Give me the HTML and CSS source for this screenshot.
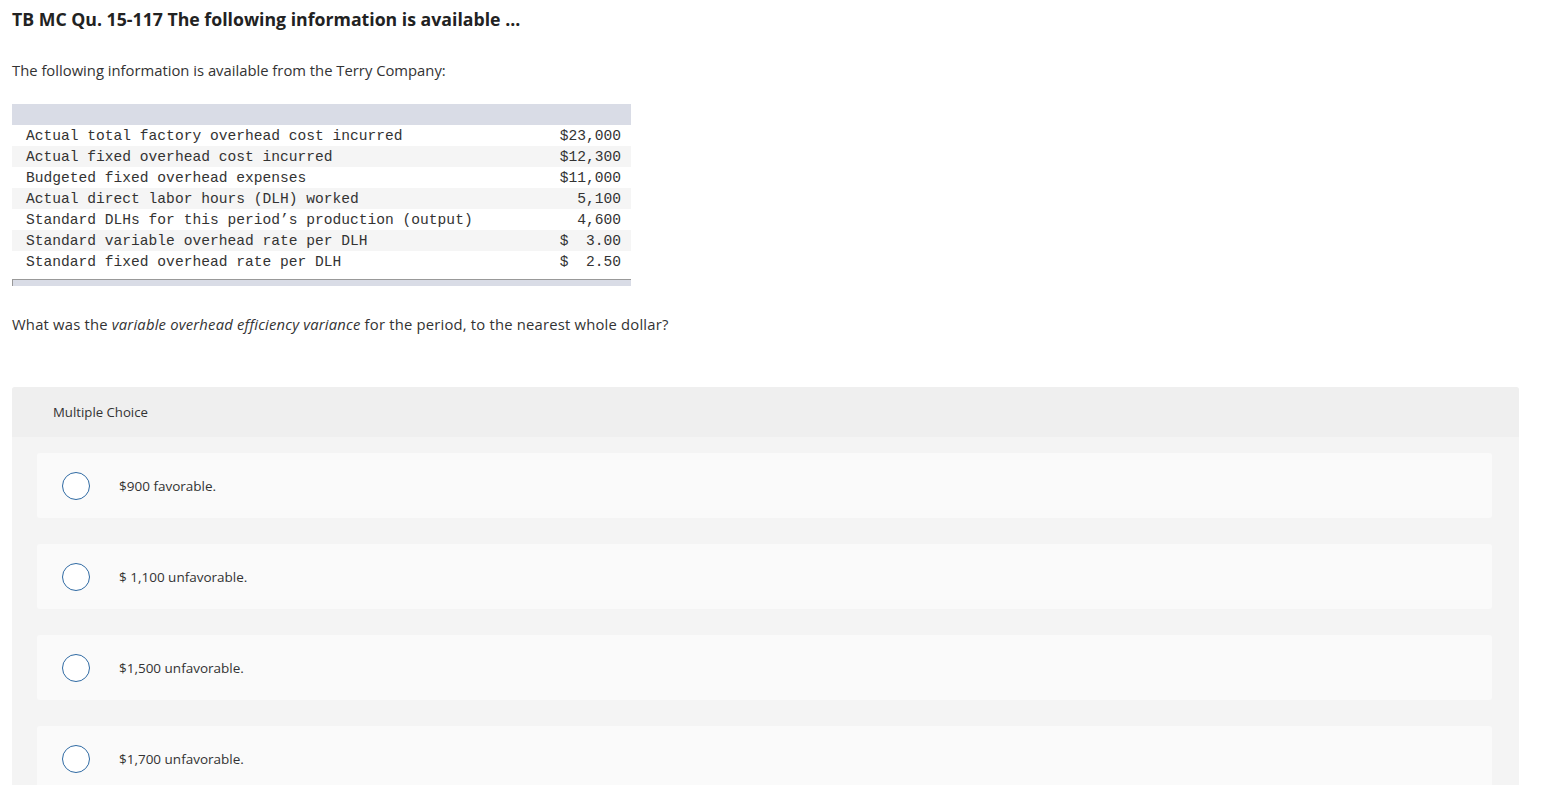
FILE: index.html
```html
<!DOCTYPE html>
<html>
<head>
<meta charset="utf-8">
<link rel="stylesheet" href="styles.css">
</head>
<body>
<div class="page">
  <h1 class="title">TB MC Qu. 15-117 The following information is available ...</h1>
  <p class="intro">The following information is available from the Terry Company:</p>
  <div class="table-wrap">
    <div class="thead"></div>
    <div class="row"><span>Actual total factory overhead cost incurred</span><span>$23,000</span></div>
    <div class="row alt"><span>Actual fixed overhead cost incurred</span><span>$12,300</span></div>
    <div class="row"><span>Budgeted fixed overhead expenses</span><span>$11,000</span></div>
    <div class="row alt"><span>Actual direct labor hours (DLH) worked</span><span>5,100</span></div>
    <div class="row"><span>Standard DLHs for this period’s production (output)</span><span>4,600</span></div>
    <div class="row alt"><span>Standard variable overhead rate per DLH</span><span>$&nbsp;&nbsp;3.00</span></div>
    <div class="row"><span>Standard fixed overhead rate per DLH</span><span>$&nbsp;&nbsp;2.50</span></div>
    <div class="tfoot"></div>
  </div>
  <p class="question">What was the <em>variable overhead efficiency variance</em> for the period, to the nearest whole dollar?</p>
  <div class="mc">
    <div class="mc-head">Multiple Choice</div>
    <div class="mc-body">
      <div class="option"><span class="radio"></span><span class="opt-text">$900 favorable.</span></div>
      <div class="option"><span class="radio"></span><span class="opt-text">$ 1,100 unfavorable.</span></div>
      <div class="option"><span class="radio"></span><span class="opt-text">$1,500 unfavorable.</span></div>
      <div class="option"><span class="radio"></span><span class="opt-text">$1,700 unfavorable.</span></div>
    </div>
  </div>
</div>
</body>
</html>
```

FILE: styles.css
```css
html, body {
  margin: 0;
  padding: 0;
  background: #fff;
  height: 799px;
  overflow: hidden;
}
.page {
  padding: 0 0 0 12px;
  width: 1507px;
  font-family: "Open Sans", "Lato", sans-serif;
  color: #333;
}
.title {
  margin: 0;
  padding-top: 7px;
  font-size: 17.7px;
  font-weight: 700;
  line-height: 24px;
  color: #222;
}
.intro {
  margin: 0;
  padding-top: 30px;
  font-size: 14.8px;
  line-height: 18px;
  color: #333;
}
.table-wrap {
  margin-top: 25px;
  width: 619px;
  font-family: "Liberation Mono", "DejaVu Sans Mono", monospace;
  font-size: 14.6px;
  color: #333;
}
.thead {
  height: 21px;
  background: #d9dce6;
}
.row {
  height: 19px;
  line-height: 19px;
  padding: 2px 10px 0 14px;
  display: flex;
  justify-content: space-between;
  background: #fff;
  white-space: pre;
}
.row.alt {
  background: #f5f5f5;
}
.tfoot {
  margin-top: 7px;
  height: 6px;
  border-top: 1px solid #999;
  border-left: 1px solid #999;
  background: #d9dce6;
}
.question {
  margin: 0;
  padding-top: 29px;
  font-size: 14.8px;
  line-height: 18px;
  color: #333;
  letter-spacing: 0.2px;
}
.question em {
  font-style: italic;
}
.mc {
  margin-top: 54px;
  width: 1507px;
  background: #f4f4f4;
  border-radius: 3px 3px 0 0;
}
.mc-head {
  height: 50px;
  line-height: 50px;
  background: #efefef;
  padding-left: 41px;
  font-size: 13.2px;
  color: #333;
  border-radius: 3px 3px 0 0;
}
.mc-body {
  height: 332px;
  overflow: hidden;
  padding: 16px 27px 0 25px;
  display: flex;
  flex-direction: column;
  gap: 26px;
}
.option {
  height: 65px;
  flex: none;
  background: #fafafa;
  border-radius: 3px;
  display: flex;
  align-items: center;
  padding-left: 25px;
}
.radio {
  width: 26px;
  height: 26px;
  border: 1.5px solid #2f6aa3;
  border-radius: 50%;
  background: #fff;
  flex: none;
}
.opt-text {
  margin-left: 29px;
  font-size: 13.5px;
  color: #333;
}
```
